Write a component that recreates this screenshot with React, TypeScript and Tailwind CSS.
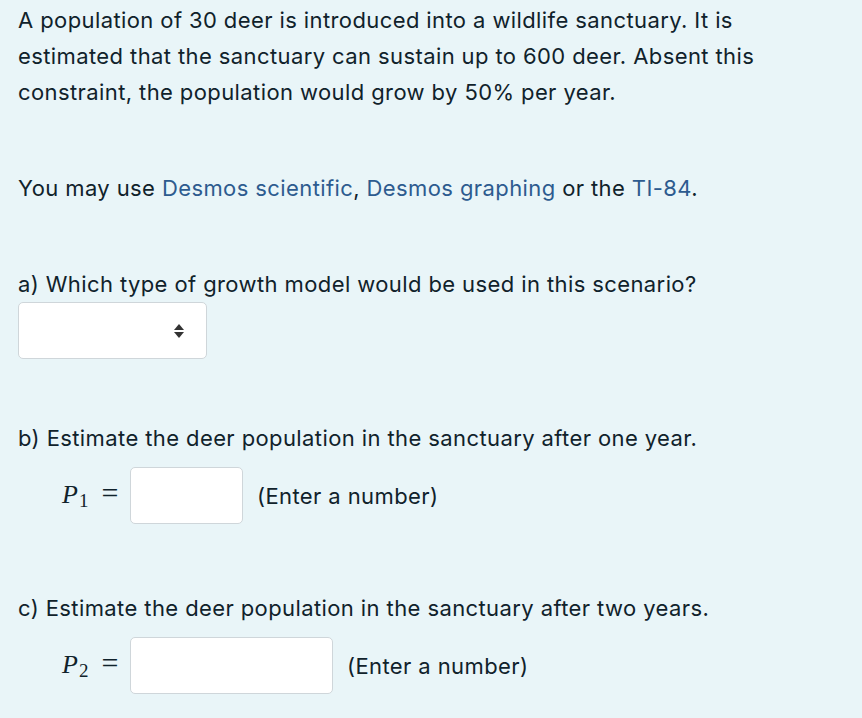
const TEXT = "text-[#10222b]";

function Sel() {
  return (
    <div className="relative h-[57px] w-[189px] rounded-[5px] border border-[#cfd6da] bg-white">
      <svg className="absolute left-[155px] top-[20px]" width="10" height="16" viewBox="0 0 10 16">
        <path d="M5 1 L10 7 H0 Z" fill="#333" />
        <path d="M0 9 H10 L5 15 Z" fill="#333" />
      </svg>
    </div>
  );
}

function MathRow({ sub, w }: { sub: string; w: string }) {
  return (
    <div className="mt-[11px] flex items-center pl-[44px]">
      <span className="flex w-[68px] items-baseline font-['Liberation_Serif',serif] text-[26px] tracking-normal text-[#10222b]">
        <span className="italic">P</span>
        <span className="ml-[1px] translate-y-[4px] text-[19px]">{sub}</span>
        <span className="ml-[13px] text-[30px] leading-none">=</span>
      </span>
      <div className={`h-[57px] ${w} rounded-[5px] border border-[#cfd6da] bg-white`} />
      <span className="ml-[14px]">(Enter a number)</span>
    </div>
  );
}

export default function App() {
  return (
    <div className={`min-h-[718px] w-[862px] bg-[#e9f5f8] px-[18px] pt-[2px] font-['Inter','Liberation_Sans',sans-serif] text-[22px] leading-[36px] tracking-[0.4px] ${TEXT}`}>
      <p>
        A population of 30 deer is introduced into a wildlife sanctuary. It is estimated that the sanctuary can sustain
        up to 600 deer. Absent this constraint, the population would grow by 50% per year.
      </p>

      <p className="mt-[60px]">
        You may use <a className="text-[#2d5b8f]">Desmos scientific</a>,{" "}
        <a className="text-[#2d5b8f]">Desmos graphing</a> or the <a className="text-[#2d5b8f]">TI-84</a>.
      </p>

      <p className="mt-[60px]">a) Which type of growth model would be used in this scenario?</p>
      <Sel />

      <p className="mt-[61px]">b) Estimate the deer population in the sanctuary after one year.</p>
      <MathRow sub="1" w="w-[113px]" />

      <p className="mt-[66px]">c) Estimate the deer population in the sanctuary after two years.</p>
      <MathRow sub="2" w="w-[203px]" />
    </div>
  );
}
